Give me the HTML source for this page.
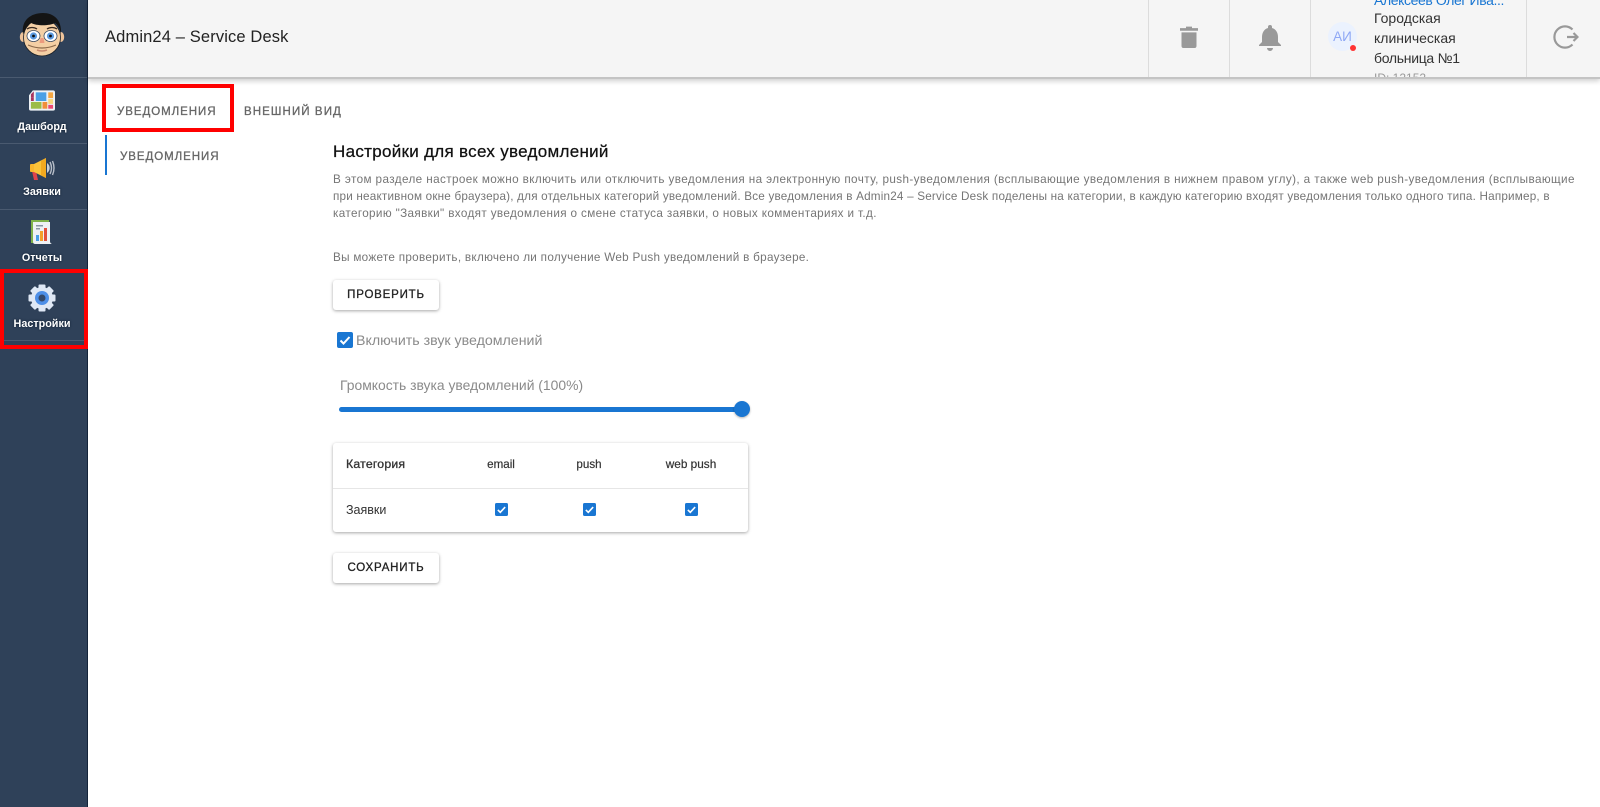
<!DOCTYPE html>
<html><head><meta charset="utf-8"><style>
*{box-sizing:border-box}
html,body{margin:0;padding:0;width:1600px;height:807px;overflow:hidden;background:#fff;font-family:"Liberation Sans",sans-serif}
.a{position:absolute;white-space:nowrap}
#side{left:0;top:0;width:88px;height:807px;background:#2f4159;border-right:1px solid #14243a}
.hr{left:0;width:87px;height:1px;background:#4a5a70}
.lb{left:0;width:84px;text-align:center;color:#fff;font-size:10.8px;font-weight:700;line-height:14px;text-shadow:0 0 2px #0c1a2c}
#hdr{left:88px;top:0;width:1512px;height:79px;background:#f5f5f5;border-bottom:2px solid #c4c4c4;box-shadow:0 2px 5px rgba(0,0,0,.2)}
.v{top:0;width:1px;height:77px;background:#dcdcdc}
.tab{font-size:11.5px;letter-spacing:.95px;color:#666;font-weight:400;-webkit-text-stroke:.3px #666;line-height:16px}
.p{left:333px;font-size:11.7px;color:#757575;line-height:16px}
.btn{left:333px;width:106px;height:30px;background:#fff;border-radius:3px;box-shadow:0 1px 3px rgba(0,0,0,.35);text-align:center;font-size:11.5px;font-weight:400;-webkit-text-stroke:.3px #222;letter-spacing:.8px;line-height:31px;color:#222}
.th{font-size:11.6px;font-weight:400;-webkit-text-stroke:.2px #333;color:#333;line-height:14px;text-align:center}
.u{left:1374px;font-size:14px;line-height:20px;color:#333}
</style></head><body>
<div class="a" id="side"></div>
<svg class="a" style="left:19px;top:12px" width="46" height="46" viewBox="0 0 46 46">
<ellipse cx="4" cy="25" rx="3.200" ry="5" fill="#eec39a"/><ellipse cx="42" cy="25" rx="3.200" ry="5" fill="#eec39a"/>
<ellipse cx="23" cy="25.500" rx="18.500" ry="18.500" fill="#f4cfa4" stroke="#1a2028" stroke-width=".8"/>
<path d="M4 22C2 8 12 1 24 1c10 0 19 6 18 21-1-5-3-9-6-11-6 3-18 3-24 0-4 3-6 7-8 11z" fill="#141414"/>
<path d="M8 17c3-2 7-2 10 0M28 17c3-2 7-2 10 0" stroke="#3a2a20" stroke-width="1.300" fill="none"/>
<ellipse cx="14.500" cy="24" rx="6.500" ry="5.500" fill="#fff" stroke="#3a4a60" stroke-width=".8"/><ellipse cx="31.500" cy="24" rx="6.500" ry="5.500" fill="#fff" stroke="#3a4a60" stroke-width=".8"/>
<circle cx="14.500" cy="24" r="3.600" fill="#5a9ae0"/><circle cx="31.500" cy="24" r="3.600" fill="#5a9ae0"/>
<circle cx="14.500" cy="24" r="1.400" fill="#111"/><circle cx="31.500" cy="24" r="1.400" fill="#111"/>
<path d="M21.500 26l-1 5h5l-1-5" fill="#ec9a7e"/>
<path d="M9 33q14 6 28 0" stroke="#8c6a4a" stroke-width="1.200" fill="none"/>
<path d="M18 38q5 2 10 0" stroke="#c98a70" stroke-width="1.500" fill="none"/>
</svg>
<div class="a hr" style="top:77px"></div>
<svg class="a" style="left:29px;top:90px" width="26" height="22" viewBox="0 0 27 22">
<path d="M4 0H25a2 2 0 0 1 2 2V19a2 2 0 0 1-2 2H2a2 2 0 0 1-2-2V5z" fill="#eef2f6"/>
<path d="M2 4l3-3v6H2z" fill="#a8355f"/><rect x="2" y="7" width="3" height="4" fill="#a8355f"/>
<rect x="7" y="2" width="11" height="9" fill="#4aa0e6"/><rect x="20" y="2" width="5" height="6" fill="#f6a742"/>
<rect x="2" y="12" width="11" height="7" fill="#9cbc47"/><rect x="14" y="12" width="5" height="7" fill="#f08f3a"/>
<rect x="20" y="9" width="5" height="5" fill="#f8d77a"/><rect x="20" y="15" width="5" height="4" fill="#ec4a72"/>
</svg>
<div class="a lb" style="top:120px">Дашборд</div>
<div class="a hr" style="top:143px"></div>
<svg class="a" style="left:29px;top:156px" width="27" height="24" viewBox="0 0 27 24">
<path d="M3 15l4 0 2 9h-4z" fill="#e0424a"/>
<rect x="1" y="8" width="6" height="8" rx="1" fill="#f8b62c"/><path d="M5 8L17 2V22L5 16z" fill="#fac33a"/><path d="M12 5l5-3V22l-5-3z" fill="#f3a91f"/>
<path d="M18 7a6 6 0 0 1 0 10z" fill="#c9ced6"/><path d="M21 6q3 6 0 12M23.500 5q3 7 0 14" stroke="#b8bec8" stroke-width="1.400" fill="none"/>
</svg>
<div class="a lb" style="top:185px">Заявки</div>
<div class="a hr" style="top:209px"></div>
<svg class="a" style="left:30px;top:220px" width="24" height="26" viewBox="0 0 24 26">
<rect x="1" y="0" width="18" height="23" fill="#7fb24a"/><path d="M3 2H20V21c0 2 1 3 3 3H5c-2 0-2-2-2-3z" fill="#eef1f4"/>
<rect x="6" y="5" width="7" height="1.500" fill="#8a96a4"/><rect x="6" y="8" width="4" height="1.500" fill="#8a96a4"/>
<rect x="6" y="15" width="3" height="6" fill="#4aa0e6"/><rect x="10" y="11" width="3" height="10" fill="#f3a02a"/><rect x="14" y="8" width="3" height="13" fill="#e2503c"/>
</svg>
<div class="a lb" style="top:251px">Отчеты</div>
<div class="a" style="left:3px;top:272px;width:81px;height:1px;background:#4a5a70"></div>
<svg class="a" style="left:28px;top:284px" width="28" height="28" viewBox="0 0 28 28">
<g fill="#dfe8f5"><circle cx="14" cy="14" r="11"/>
<rect x="10.500" y="0.500" width="7" height="5" rx="1"/><rect x="10.500" y="22.500" width="7" height="5" rx="1"/><rect x="0.500" y="10.500" width="5" height="7" rx="1"/><rect x="22.500" y="10.500" width="5" height="7" rx="1"/>
<g transform="rotate(45 14 14)"><rect x="10.500" y="0.500" width="7" height="5" rx="1"/><rect x="10.500" y="22.500" width="7" height="5" rx="1"/><rect x="0.500" y="10.500" width="5" height="7" rx="1"/><rect x="22.500" y="10.500" width="5" height="7" rx="1"/></g></g>
<circle cx="14" cy="14" r="7" fill="#4d8fe8"/><circle cx="14" cy="14" r="3.500" fill="#34496a"/>
</svg>
<div class="a lb" style="top:317px">Настройки</div>
<div class="a" style="left:3px;top:340px;width:81px;height:1px;background:#4a5a70"></div>
<div class="a" style="left:0;top:269px;width:88px;height:80px;border:4px solid #f00"></div>

<div class="a" id="hdr"></div>
<div class="a" style="left:105px;top:27px;font-size:16.5px;letter-spacing:.13px;line-height:20px;color:#222">Admin24 – Service Desk</div>
<div class="a v" style="left:1148px"></div><div class="a v" style="left:1229px"></div><div class="a v" style="left:1310px"></div><div class="a v" style="left:1526px"></div>
<svg class="a" style="left:1179px;top:25px" width="20" height="23" viewBox="0 0 20 22" preserveAspectRatio="none"><path d="M1 3H7V1.500H13V3H19V5.500H1zM2.500 7H17.500V20a2 2 0 0 1-2 2H4.500a2 2 0 0 1-2-2z" fill="#999"/></svg>
<svg class="a" style="left:1258px;top:24px" width="24" height="27" viewBox="0 0 24 27"><path d="M12 1a2 2 0 0 1 2 2v1c4 1 6 5 6 9v5l3 3v1H1v-1l3-3v-5c0-4 2-8 6-9V3a2 2 0 0 1 2-2zM9 24h6a3 3 0 0 1-6 0z" fill="#999"/></svg>
<div class="a" style="left:1328px;top:22px;width:29px;height:29px;border-radius:50%;background:#ebf2fe;color:#8fa8f5;font-size:13.5px;line-height:29px;text-align:center">АИ</div>
<div class="a" style="left:1350px;top:45px;width:6px;height:6px;border-radius:50%;background:#f33"></div>
<div class="a" style="left:1360px;top:0;width:166px;height:77px;overflow:hidden">
<div class="a u" style="left:14px;top:-10px;color:#1976d2;letter-spacing:-.4px">Алексеев Олег Ива...</div>
<div class="a u" style="left:14px;top:8px">Городская</div>
<div class="a u" style="left:14px;top:28px">клиническая</div>
<div class="a u" style="left:14px;top:48px;letter-spacing:-.3px">больница №1</div>
<div class="a u" style="left:14px;top:68px;font-size:12px;color:#999">ID: 12152</div>
</div>
<svg class="a" style="left:1553px;top:25px" width="26" height="24" viewBox="0 0 26 24" fill="none" stroke="#999" stroke-width="2.200"><path d="M19.500 4.500A10.600 10.600 0 1 0 19.500 19.500"/><path d="M14 12H24.500M20.500 8L24.500 12L20.500 16"/></svg>

<div class="a" style="left:102px;top:84px;width:132px;height:48px;border:4px solid #f00"></div>
<div class="a tab" style="left:117px;top:104px">УВЕДОМЛЕНИЯ</div>
<div class="a tab" style="left:244px;top:104px;letter-spacing:1.09px">ВНЕШНИЙ ВИД</div>
<div class="a" style="left:105px;top:135px;width:2px;height:40px;background:#1976d2"></div>
<div class="a tab" style="left:120px;top:149px">УВЕДОМЛЕНИЯ</div>
<div class="a" style="left:333px;top:142px;font-size:17px;letter-spacing:.3px;line-height:20px;color:#111;font-weight:400;-webkit-text-stroke:.25px #111">Настройки для всех уведомлений</div>
<div class="a p" style="top:172px;letter-spacing:.4px">В этом разделе настроек можно включить или отключить уведомления на электронную почту, push-уведомления (всплывающие уведомления в нижнем правом углу), а также web push-уведомления (всплывающие</div>
<div class="a p" style="top:189px;letter-spacing:.2px">при неактивном окне браузера), для отдельных категорий уведомлений. Все уведомления в Admin24 – Service Desk поделены на категории, в каждую категорию входят уведомления только одного типа. Например, в</div>
<div class="a p" style="top:206px;letter-spacing:.37px">категорию "Заявки" входят уведомления о смене статуса заявки, о новых комментариях и т.д.</div>
<div class="a p" style="top:250px;letter-spacing:.3px">Вы можете проверить, включено ли получение Web Push уведомлений в браузере.</div>
<div class="a btn" style="top:280px">ПРОВЕРИТЬ</div>
<svg class="a" style="left:337px;top:332px" width="16" height="16" viewBox="0 0 16 16"><rect width="16" height="16" rx="2" fill="#1976d2"/><path d="M3.500 8.500L6.500 11.500 12.500 5" stroke="#fff" stroke-width="2" fill="none"/></svg>
<div class="a" style="left:356px;top:333px;font-size:14.2px;line-height:16px;color:#8a8a8a">Включить звук уведомлений</div>
<div class="a" style="left:340px;top:377px;font-size:13.9px;line-height:16px;color:#8a8a8a">Громкость звука уведомлений (100%)</div>
<div class="a" style="left:339px;top:407px;width:403px;height:5px;border-radius:2.500px;background:#1976d2"></div>
<div class="a" style="left:734px;top:401px;width:16px;height:16px;border-radius:50%;background:#1976d2;box-shadow:0 1px 2px rgba(0,0,0,.3)"></div>
<div class="a" style="left:333px;top:443px;width:415px;height:89px;background:#fff;border-radius:3px;box-shadow:0 1px 3px rgba(0,0,0,.35)"></div>
<div class="a" style="left:333px;top:488px;width:415px;height:1px;background:#e6e6e6"></div>
<div class="a th" style="left:346px;top:457px;font-size:12.3px;letter-spacing:.2px;-webkit-text-stroke:.3px #333">Категория</div>
<div class="a th" style="left:461px;top:458px;width:80px">email</div>
<div class="a th" style="left:549px;top:458px;width:80px">push</div>
<div class="a th" style="left:641px;top:457px;width:100px;font-size:11.8px">web push</div>
<div class="a" style="left:346px;top:503px;font-size:12.5px;line-height:14px;color:#333">Заявки</div>
<svg class="a" style="left:495px;top:503px" width="13" height="13" viewBox="0 0 16 16"><rect width="16" height="16" rx="2" fill="#1976d2"/><path d="M3.500 8.500L6.500 11.500 12.500 5" stroke="#fff" stroke-width="2" fill="none"/></svg>
<svg class="a" style="left:583px;top:503px" width="13" height="13" viewBox="0 0 16 16"><rect width="16" height="16" rx="2" fill="#1976d2"/><path d="M3.500 8.500L6.500 11.500 12.500 5" stroke="#fff" stroke-width="2" fill="none"/></svg>
<svg class="a" style="left:685px;top:503px" width="13" height="13" viewBox="0 0 16 16"><rect width="16" height="16" rx="2" fill="#1976d2"/><path d="M3.500 8.500L6.500 11.500 12.500 5" stroke="#fff" stroke-width="2" fill="none"/></svg>
<div class="a btn" style="top:553px">СОХРАНИТЬ</div>
</body></html>
